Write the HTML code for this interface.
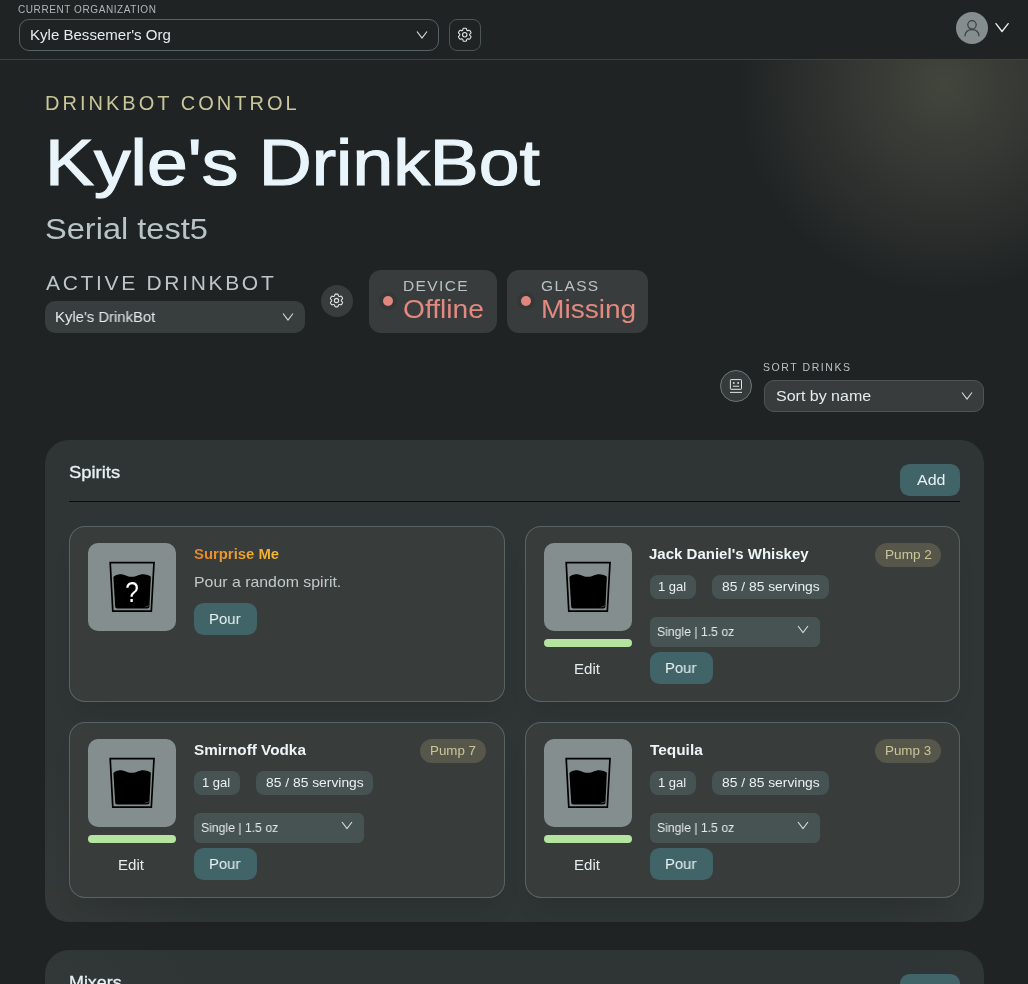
<!DOCTYPE html>
<html lang="en">
<head>
<meta charset="utf-8">
<title>DrinkBot Control</title>
<style>
*{box-sizing:border-box;margin:0;padding:0}
html,body{width:1028px;height:984px;overflow:hidden;background:#1f2324}
body{position:relative;font-family:"Liberation Sans",sans-serif;color:#e6eef0}
.abs{position:absolute}
svg.abs{will-change:transform}
.t{position:absolute;white-space:nowrap;line-height:1;will-change:transform}
#glow{position:absolute;left:700px;top:60px;width:328px;height:260px;background:radial-gradient(circle 208px at 244px 26px,rgba(201,198,154,.21),rgba(201,198,154,0))}
#hdr{position:absolute;left:0;top:0;width:1028px;height:60px;background:#1f2324;border-bottom:1px solid #3b4546}
.sel{position:absolute;border-radius:10px}
.card{position:absolute;width:436px;height:176px;box-shadow:inset 0 0 0 1px #586366,0 16px 26px -10px rgba(0,0,0,.13);border-radius:16px;background:#383c3b}
.tile{position:absolute;left:19px;top:17px;width:88px;height:88px;border-radius:10px;background:#848e8e}
.bar{position:absolute;left:19px;top:113px;width:88px;height:8px;border-radius:4px;background:#b5e3a0}
.chip{position:absolute;height:24px;border-radius:8px;background:#475252}
.pump{position:absolute;height:24px;border-radius:12px;background:#56574a}
.btn{position:absolute;height:32px;border-radius:9.5px;background:#406467}
.dd{position:absolute;height:30px;border-radius:6px;background:#475252}
.panel{position:absolute;left:45px;width:939px;border-radius:24px;background:radial-gradient(circle 160px at 0 100%,rgba(56,60,59,.6),rgba(56,60,59,0)),radial-gradient(circle 110px at 100% 100%,rgba(56,60,59,.45),rgba(56,60,59,0)),#2f3535}
</style>
</head>
<body>
<div id="glow"></div>
<div id="hdr">
  <span class="t" id="lblorg" style="left:18.3px;top:5px;font-size:10px;letter-spacing:0.58px;color:#aeb8b9">CURRENT ORGANIZATION</span>
  <div class="sel" style="left:19px;top:19px;width:420px;height:32px;border:1px solid #566365;background:#1f2324"></div>
  <span class="t" id="orgname" style="left:30px;top:27px;font-size:15px;color:#e4ecee;letter-spacing:0px;transform:scaleX(1.0032);transform-origin:0 0">Kyle Bessemer's Org</span>
  <svg class="abs" style="left:416px;top:30px" width="12" height="10" viewBox="0 0 12 10"><path d="M1 1.5 L6 8 L11 1.5" fill="none" stroke="#d5dddd" stroke-width="1.2"/></svg>
  <div class="sel" style="left:449px;top:19px;width:32px;height:32px;border-radius:8px;border:1px solid #4b5556;background:#1f2324"></div>
  <svg class="abs gear" style="left:456.25px;top:26.25px" width="17.5" height="17.5" viewBox="0 0 24 24"><use href="#gear"/></svg>
  <div class="abs" style="left:956px;top:12px;width:32px;height:32px;border-radius:50%;background:#848e8e"></div>
  <svg class="abs" style="left:956px;top:12px" width="32" height="32" viewBox="0 0 32 32"><circle cx="16" cy="12.8" r="4.2" fill="none" stroke="#384042" stroke-width="1.2"/><path d="M9 23.800 C9.300 19.800 12.200 17.600 16 17.600 C19.800 17.600 22.700 19.800 23 23.800" fill="none" stroke="#384042" stroke-width="1.2" stroke-linecap="round"/></svg>
  <svg class="abs" style="left:994px;top:21px" width="16" height="13" viewBox="0 0 16 13"><path d="M2 2.600 L8 10.500 L14.200 2.600" fill="none" stroke="#eef4f4" stroke-width="1.3" stroke-linecap="round" stroke-linejoin="round"/></svg>
</div>

<svg width="0" height="0" style="position:absolute"><defs>
<g id="gear" fill="none" stroke="#e0e8e8" stroke-width="1.5" stroke-linecap="round" stroke-linejoin="round"><path d="M9.594 3.94c.09-.542.56-.94 1.11-.94h2.593c.55 0 1.02.398 1.11.94l.213 1.281c.063.374.313.686.645.87.074.04.147.083.22.127.325.196.72.257 1.075.124l1.217-.456a1.125 1.125 0 0 1 1.37.49l1.296 2.247a1.125 1.125 0 0 1-.26 1.431l-1.003.827c-.293.241-.438.613-.43.992a7.723 7.723 0 0 1 0 .255c-.008.378.137.75.43.991l1.004.827c.424.35.534.955.26 1.43l-1.298 2.247a1.125 1.125 0 0 1-1.369.491l-1.217-.456c-.355-.133-.75-.072-1.076.124a6.47 6.47 0 0 1-.22.128c-.331.183-.581.495-.644.869l-.213 1.281c-.09.543-.56.94-1.11.94h-2.594c-.55 0-1.019-.398-1.11-.94l-.213-1.281c-.062-.374-.312-.686-.644-.87a6.52 6.52 0 0 1-.22-.127c-.325-.196-.72-.257-1.076-.124l-1.217.456a1.125 1.125 0 0 1-1.369-.49l-1.297-2.247a1.125 1.125 0 0 1 .26-1.431l1.004-.827c.292-.24.437-.613.43-.991a6.932 6.932 0 0 1 0-.255c.007-.38-.138-.751-.43-.992l-1.004-.827a1.125 1.125 0 0 1-.26-1.43l1.297-2.247a1.125 1.125 0 0 1 1.37-.491l1.216.456c.356.133.751.072 1.076-.124.072-.044.146-.086.22-.128.332-.183.582-.495.644-.869l.214-1.28Z"/><path d="M15 12a3 3 0 1 1-6 0 3 3 0 0 1 6 0Z"/></g>
</defs></svg>

<span class="t" id="dbc" style="left:44.6px;top:93px;font-size:20px;letter-spacing:3.02px;color:#c9c69a">DRINKBOT CONTROL</span>
<span class="t" id="title" style="left:45.2px;top:130px;font-size:65px;color:#e9f5fb;letter-spacing:0px;-webkit-text-stroke:1.2px #e9f5fb;transform:scaleX(1.1283);transform-origin:0 0">Kyle's DrinkBot</span>
<span class="t" id="serial" style="left:44.7px;top:215px;font-size:29px;color:#b9c4c8;letter-spacing:0px;transform:scaleX(1.1228);transform-origin:0 0">Serial test5</span>
<span class="t" id="adb" style="left:45.7px;top:272px;font-size:21px;letter-spacing:2.68px;color:#bdc6c7">ACTIVE DRINKBOT</span>
<div class="sel" style="left:45px;top:301px;width:260px;height:32px;background:#383d3d"></div>
<span class="t" id="selbot" style="left:55px;top:309px;font-size:15px;color:#e4ecee;letter-spacing:0px;transform:scaleX(0.9912);transform-origin:0 0">Kyle's DrinkBot</span>
<svg class="abs" style="left:282px;top:312px" width="12" height="10" viewBox="0 0 12 10"><path d="M1 1.5 L6 8 L11 1.5" fill="none" stroke="#d5dddd" stroke-width="1.1"/></svg>
<div class="abs" style="left:321px;top:285px;width:32px;height:32px;border-radius:50%;background:#383c3c"></div>
<svg class="abs" style="left:328.3px;top:292px" width="17" height="17" viewBox="0 0 24 24"><use href="#gear"/></svg>

<div class="abs" style="left:369px;top:270px;width:128px;height:63px;border-radius:12px;background:#383c3c"></div>
<div class="abs" style="left:379px;top:292px;width:18px;height:18px;border-radius:50%;background:#333737"></div>
<div class="abs" style="left:383px;top:296px;width:10px;height:10px;border-radius:50%;background:#e1867d"></div>
<span class="t" id="dev" style="left:403.3px;top:278px;font-size:15.5px;letter-spacing:1.4px;color:#b9c2c3">DEVICE</span>
<span class="t" id="off" style="left:402.7px;top:297px;font-size:25px;color:#e28a80;letter-spacing:0px;transform:scaleX(1.1252);transform-origin:0 0">Offline</span>

<div class="abs" style="left:507px;top:270px;width:141px;height:63px;border-radius:12px;background:#383c3c"></div>
<div class="abs" style="left:517px;top:292px;width:18px;height:18px;border-radius:50%;background:#333737"></div>
<div class="abs" style="left:521px;top:296px;width:10px;height:10px;border-radius:50%;background:#e1867d"></div>
<span class="t" id="gls" style="left:540.7px;top:278px;font-size:15.5px;letter-spacing:1.37px;color:#b9c2c3">GLASS</span>
<span class="t" id="mis" style="left:540.6px;top:297px;font-size:25px;color:#e28a80;letter-spacing:0px;transform:scaleX(1.1235);transform-origin:0 0">Missing</span>

<div class="abs" style="left:720px;top:370px;width:32px;height:32px;border-radius:50%;background:#353b3b;border:1px solid #6c7979"></div>
<svg class="abs" style="left:720px;top:370px" width="32" height="32" viewBox="0 0 32 32"><rect x="10.4" y="9.600" width="11.100" height="9.700" rx=".6" fill="none" stroke="#dde5e5" stroke-width="1"/><rect x="12.900" y="12.200" width="1.700" height="1.600" fill="#dde5e5"/><rect x="17.300" y="12.200" width="1.700" height="1.600" fill="#dde5e5"/><path d="M12.900 16.200h6.200M10 22.400h12" stroke="#dde5e5" stroke-width="1"/></svg>
<span class="t" id="sortl" style="left:763.1px;top:362px;font-size:10.5px;letter-spacing:1.56px;color:#b9c2c3">SORT DRINKS</span>
<div class="sel" style="left:764px;top:380px;width:220px;height:32px;background:#383c3c;border:1px solid #4d5655"></div>
<span class="t" id="sortv" style="left:775.7px;top:388px;font-size:15px;color:#e4ecee;letter-spacing:0px;transform:scaleX(1.0660);transform-origin:0 0">Sort by name</span>
<svg class="abs" style="left:961px;top:391px" width="12" height="10" viewBox="0 0 12 10"><path d="M1 1.5 L6 8 L11 1.5" fill="none" stroke="#d5dddd" stroke-width="1.1"/></svg>

<div class="panel" style="top:440px;height:482px"></div>
<span class="t" id="spirits" style="left:69px;top:464px;font-size:16.5px;-webkit-text-stroke:.3px #e9f1f3;color:#e9f1f3;letter-spacing:0px;transform:scaleX(1.1148);transform-origin:0 0">Spirits</span>
<div class="btn" style="left:900px;top:464px;width:60px"></div>
<span class="t" id="add" style="left:916.5px;top:472px;font-size:15px;color:#e9f1f3;letter-spacing:0px;transform:scaleX(1.0656);transform-origin:0 0">Add</span>
<div class="abs" style="left:69px;top:501px;width:891px;height:1px;background:#0a0c0c"></div>

<div class="card" style="left:69px;top:526px">
<div class="tile"></div><svg class="abs" style="left:19px;top:17px" width="88" height="88" viewBox="0 0 88 88"><path d="M22.2 19.700 H66 L63.300 68.100 H24.800 Z" fill="none" stroke="#000" stroke-width="1.700" stroke-linejoin="miter"/><path d="M25.4 34.200 C26.300 32.200 30 31.200 32.500 31.200 C36.500 31.200 39 33.800 43.700 33.800 C48.400 33.800 51 31.200 55 31.200 C58 31.200 61.600 32 62.900 33.800 L61.400 63.700 Q61.300 65.500 59.400 65.500 L29.200 65.500 Q27.300 65.500 27.200 63.700 Z" fill="#000"/><path d="M57.500 64.300 l1.200 -1.300 l.8 1 l1.200 -1.800" fill="none" stroke="#6d7777" stroke-width=".5"/><text transform="translate(43.900 59.400) scale(.87 1.08)" x="0" y="0" text-anchor="middle" font-family="Liberation Sans, sans-serif" font-size="28" fill="#fff">?</text></svg>
<span class="t" id="surp" style="left:125.3px;top:21px;font-size:14.5px;font-weight:bold;background:linear-gradient(90deg,#e8852a,#f6ba2e);-webkit-background-clip:text;background-clip:text;color:transparent;letter-spacing:0px;transform:scaleX(1.0254);transform-origin:0 0">Surprise Me</span>
<span class="t" id="rand" style="left:124.7px;top:48px;font-size:15px;color:#c1caca;letter-spacing:0px;transform:scaleX(1.0578);transform-origin:0 0">Pour a random spirit.</span>
<div class="btn" style="left:125px;top:77px;width:63px"></div><span class="t pour" id="pour0" style="left:140px;top:85px;font-size:15px;color:#e9f1f3;letter-spacing:0px;transform:scaleX(0.9939);transform-origin:0 0">Pour</span>
</div>
<div class="card" style="width:435px;left:525px;top:526px">
<div class="tile"></div><svg class="abs" style="left:19px;top:17px" width="88" height="88" viewBox="0 0 88 88"><path d="M22.2 19.700 H66 L63.300 68.100 H24.800 Z" fill="none" stroke="#000" stroke-width="1.700" stroke-linejoin="miter"/><path d="M25.4 34.200 C26.300 32.200 30 31.200 32.500 31.200 C36.500 31.200 39 33.800 43.700 33.800 C48.400 33.800 51 31.200 55 31.200 C58 31.200 61.600 32 62.900 33.800 L61.400 63.700 Q61.300 65.500 59.400 65.500 L29.200 65.500 Q27.300 65.500 27.200 63.700 Z" fill="#000"/><path d="M57.500 64.300 l1.200 -1.300 l.8 1 l1.200 -1.800" fill="none" stroke="#6d7777" stroke-width=".5"/></svg>
<div class="bar"></div>
<span class="t edit" id="edit1" style="left:48.8px;top:136px;font-size:14px;color:#e4ecee;letter-spacing:0px;transform:scaleX(1.0766);transform-origin:0 0">Edit</span>
<span class="t ttl" id="ttl1" style="left:124.2px;top:21px;font-size:14.5px;font-weight:bold;color:#eef5f7;letter-spacing:0px;transform:scaleX(1.0355);transform-origin:0 0">Jack Daniel's Whiskey</span>
<div class="pump" style="left:350px;top:17px;width:66px"></div><span class="t pmp" id="pmp1" style="left:360.2px;top:22px;font-size:13px;color:#c9c69a;letter-spacing:0px;transform:scaleX(1.0475);transform-origin:0 0">Pump 2</span>
<div class="chip" style="left:125px;top:49px;width:46px"></div><span class="t gal" id="gal1" style="left:133.2px;top:54px;font-size:13px;color:#e9f1f3;letter-spacing:0px;transform:scaleX(0.9976);transform-origin:0 0">1 gal</span>
<div class="chip" style="left:187px;top:49px;width:117px"></div><span class="t srv" id="srv1" style="left:196.6px;top:54px;font-size:13px;color:#e9f1f3;letter-spacing:0px;transform:scaleX(1.0646);transform-origin:0 0">85 / 85 servings</span>
<div class="dd" style="left:125px;top:91px;width:170px"></div><span class="t sgl" id="sgl1" style="left:131.7px;top:99px;font-size:13px;color:#e4ecee;letter-spacing:0px;transform:scaleX(0.9392);transform-origin:0 0">Single | 1.5 oz</span>
<svg class="abs" style="left:272px;top:99px" width="12" height="9" viewBox="0 0 12 9"><path d="M1 1 L6 7.500 L11 1" fill="none" stroke="#d5dddd" stroke-width="1.1"/></svg>
<div class="btn" style="left:125px;top:126px;width:63px"></div><span class="t pour" id="pour1" style="left:139.8px;top:134px;font-size:15px;color:#e9f1f3;letter-spacing:0px;transform:scaleX(0.9860);transform-origin:0 0">Pour</span>
</div>
<div class="card" style="left:69px;top:722px">
<div class="tile"></div><svg class="abs" style="left:19px;top:17px" width="88" height="88" viewBox="0 0 88 88"><path d="M22.2 19.700 H66 L63.300 68.100 H24.800 Z" fill="none" stroke="#000" stroke-width="1.700" stroke-linejoin="miter"/><path d="M25.4 34.200 C26.300 32.200 30 31.200 32.500 31.200 C36.500 31.200 39 33.800 43.700 33.800 C48.400 33.800 51 31.200 55 31.200 C58 31.200 61.600 32 62.900 33.800 L61.400 63.700 Q61.300 65.500 59.400 65.500 L29.200 65.500 Q27.300 65.500 27.200 63.700 Z" fill="#000"/><path d="M57.500 64.300 l1.200 -1.300 l.8 1 l1.200 -1.800" fill="none" stroke="#6d7777" stroke-width=".5"/></svg>
<div class="bar"></div>
<span class="t edit" id="edit2" style="left:48.8px;top:136px;font-size:14px;color:#e4ecee;letter-spacing:0px;transform:scaleX(1.0766);transform-origin:0 0">Edit</span>
<span class="t ttl" id="ttl2" style="left:124.7px;top:21px;font-size:14.5px;font-weight:bold;color:#eef5f7;letter-spacing:0px;transform:scaleX(1.0548);transform-origin:0 0">Smirnoff Vodka</span>
<div class="pump" style="left:351px;top:17px;width:66px"></div><span class="t pmp" id="pmp2" style="left:361.2px;top:22px;font-size:13px;color:#c9c69a;letter-spacing:0px;transform:scaleX(1.0250);transform-origin:0 0">Pump 7</span>
<div class="chip" style="left:125px;top:49px;width:46px"></div><span class="t gal" id="gal2" style="left:133.2px;top:54px;font-size:13px;color:#e9f1f3;letter-spacing:0px;transform:scaleX(0.9976);transform-origin:0 0">1 gal</span>
<div class="chip" style="left:187px;top:49px;width:117px"></div><span class="t srv" id="srv2" style="left:196.6px;top:54px;font-size:13px;color:#e9f1f3;letter-spacing:0px;transform:scaleX(1.0646);transform-origin:0 0">85 / 85 servings</span>
<div class="dd" style="left:125px;top:91px;width:170px"></div><span class="t sgl" id="sgl2" style="left:131.7px;top:99px;font-size:13px;color:#e4ecee;letter-spacing:0px;transform:scaleX(0.9392);transform-origin:0 0">Single | 1.5 oz</span>
<svg class="abs" style="left:272px;top:99px" width="12" height="9" viewBox="0 0 12 9"><path d="M1 1 L6 7.500 L11 1" fill="none" stroke="#d5dddd" stroke-width="1.1"/></svg>
<div class="btn" style="left:125px;top:126px;width:63px"></div><span class="t pour" id="pour2" style="left:139.8px;top:134px;font-size:15px;color:#e9f1f3;letter-spacing:0px;transform:scaleX(0.9860);transform-origin:0 0">Pour</span>
</div>
<div class="card" style="width:435px;left:525px;top:722px">
<div class="tile"></div><svg class="abs" style="left:19px;top:17px" width="88" height="88" viewBox="0 0 88 88"><path d="M22.2 19.700 H66 L63.300 68.100 H24.800 Z" fill="none" stroke="#000" stroke-width="1.700" stroke-linejoin="miter"/><path d="M25.4 34.200 C26.300 32.200 30 31.200 32.500 31.200 C36.500 31.200 39 33.800 43.700 33.800 C48.400 33.800 51 31.200 55 31.200 C58 31.200 61.600 32 62.900 33.800 L61.400 63.700 Q61.300 65.500 59.400 65.500 L29.200 65.500 Q27.300 65.500 27.200 63.700 Z" fill="#000"/><path d="M57.500 64.300 l1.200 -1.300 l.8 1 l1.200 -1.800" fill="none" stroke="#6d7777" stroke-width=".5"/></svg>
<div class="bar"></div>
<span class="t edit" id="edit3" style="left:48.8px;top:136px;font-size:14px;color:#e4ecee;letter-spacing:0px;transform:scaleX(1.0766);transform-origin:0 0">Edit</span>
<span class="t ttl" id="ttl3" style="left:125.2px;top:21px;font-size:14.5px;font-weight:bold;color:#eef5f7;letter-spacing:0px;transform:scaleX(1.0615);transform-origin:0 0">Tequila</span>
<div class="pump" style="left:350px;top:17px;width:66px"></div><span class="t pmp" id="pmp3" style="left:360.2px;top:22px;font-size:13px;color:#c9c69a;letter-spacing:0px;transform:scaleX(1.0298);transform-origin:0 0">Pump 3</span>
<div class="chip" style="left:125px;top:49px;width:46px"></div><span class="t gal" id="gal3" style="left:133.2px;top:54px;font-size:13px;color:#e9f1f3;letter-spacing:0px;transform:scaleX(0.9976);transform-origin:0 0">1 gal</span>
<div class="chip" style="left:187px;top:49px;width:117px"></div><span class="t srv" id="srv3" style="left:196.6px;top:54px;font-size:13px;color:#e9f1f3;letter-spacing:0px;transform:scaleX(1.0646);transform-origin:0 0">85 / 85 servings</span>
<div class="dd" style="left:125px;top:91px;width:170px"></div><span class="t sgl" id="sgl3" style="left:131.7px;top:99px;font-size:13px;color:#e4ecee;letter-spacing:0px;transform:scaleX(0.9392);transform-origin:0 0">Single | 1.5 oz</span>
<svg class="abs" style="left:272px;top:99px" width="12" height="9" viewBox="0 0 12 9"><path d="M1 1 L6 7.500 L11 1" fill="none" stroke="#d5dddd" stroke-width="1.1"/></svg>
<div class="btn" style="left:125px;top:126px;width:63px"></div><span class="t pour" id="pour3" style="left:139.8px;top:134px;font-size:15px;color:#e9f1f3;letter-spacing:0px;transform:scaleX(0.9860);transform-origin:0 0">Pour</span>
</div>
<div class="panel" style="top:950px;height:100px"></div>
<span class="t" id="mixers" style="left:69px;top:974px;font-size:16.5px;-webkit-text-stroke:.3px #e9f1f3;color:#e9f1f3;letter-spacing:0px;transform:scaleX(1.0836);transform-origin:0 0">Mixers</span>
<div class="btn" style="left:900px;top:974px;width:60px"></div>
</body>
</html>
